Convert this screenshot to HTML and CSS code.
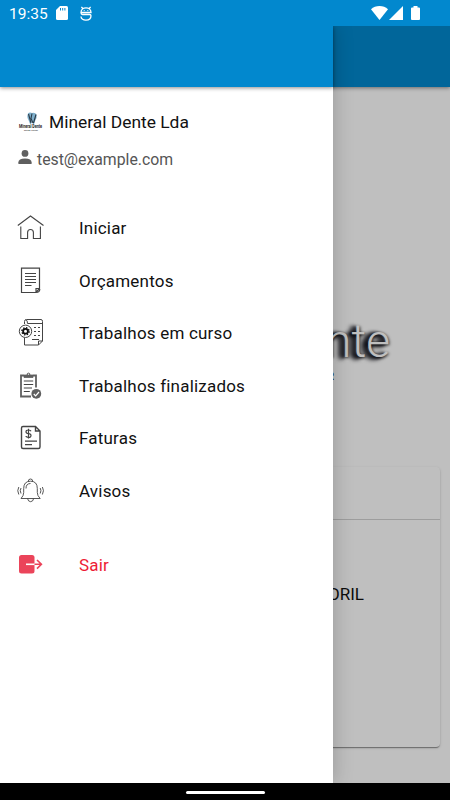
FILE: index.html
```html
<!DOCTYPE html>
<html lang="pt">
<head>
    <meta charset="UTF-8">
    <meta name="viewport" content="width=device-width, initial-scale=1.0">
    <title>Mineral Dente</title>
    <link rel="stylesheet" href="styles.css">
</head>
<body>
    <div class="screen">
        <div class="status-bar">
            <span class="time">19:35</span>
            <svg class="sd" width="12" height="14" viewBox="0 0 12 14">
                <path d="M4 0h6.5Q12 0 12 1.5v11q0 1.5-1.5 1.5h-9Q0 14 0 12.500V4z" fill="#fff"/>
                <path d="M4.500 2v2.500M6.700 2v2.500M8.900 2v2.500" stroke="#0288ce" stroke-width="1"/>
            </svg>
            <svg class="debug" width="12" height="15" viewBox="0 0 12 15" fill="none" stroke="#fff" stroke-width="1.300">
                <path d="M1 6.500C1 .3 11 .3 11 6.500zM1 6.500q0 2 1.500 2h7q1.500 0 1.500 1.200c0 5.800-10 5.800-10 .8M2.800 2.500 1.400.8M9.200 2.500 10.600.8"/>
                <path d="M3.700 4.600h1M7.300 4.600h1" stroke-width="1"/>
            </svg>
            <div class="signals">
                <svg width="17" height="14" viewBox="0 0 17 14" fill="#fff"><path d="M0 3.300Q3.500 0 8.500 0T17 3.300L8.500 14z"/></svg>
                <svg width="14" height="14" viewBox="0 0 14 14" fill="#fff"><path d="M14 0v14H0z"/></svg>
                <svg class="battery" width="9" height="14" viewBox="0 0 9 14" fill="#fff"><path d="M2.500 0h4v1.500H8q1 0 1 1V13q0 1-1 1H1q-1 0-1-1V2.500q0-1 1-1h1.500z"/></svg>
            </div>
        </div>

        <div class="app">
            <div class="page">
                <div class="toolbar"></div>
                <div class="brand">
                    <div class="brand-name">Dente</div>
                    <div class="brand-sub">CENTER</div>
                </div>
                <div class="card">
                    <div class="card-header"></div>
                    <div class="card-body">ESTORIL</div>
                </div>
            </div>
            <div class="backdrop"></div>

            <div class="menu">
                <div class="menu-toolbar"></div>
                <div class="company">
                    <svg class="logo" width="26" height="20" viewBox="0 0 26 20">
                        <path d="M10 1.500Q11.500 0 14 1 17 0 18.500 2.500 19 6 17.500 8l-1.500 4h-1L14 9l-1 3h-1l-1.500-4Q8.500 5 10 1.500z" fill="#7fb0cc"/>
                        <path d="M10.500 2 13 11M14 1.500l-1 5 2 4.500M18 2.500 15.500 11" stroke="#2c3b48" stroke-width="1.100" fill="none"/>
                        <text class="logo-name" x="1" y="16" textLength="23" lengthAdjust="spacingAndGlyphs">Mineral Dente</text>
                        <text class="logo-sub" x="6" y="18.500" textLength="14" lengthAdjust="spacingAndGlyphs">DENTAL CENTER</text>
                    </svg>
                    <span>Mineral Dente Lda</span>
                </div>
                <div class="user">
                    <svg width="14" height="14" viewBox="0 0 14 14" fill="#5f5f5f">
                        <circle cx="7" cy="3.400" r="3.400"/>
                        <path d="M.4 14v-1.700Q.4 8.500 7 8.500t6.600 3.800V14z"/>
                    </svg>
                    <span>test@example.com</span>
                </div>

                <div class="item">
                    <svg class="icon" viewBox="0 0 28 28" stroke-width="1.100">
                        <path d="M.8 11.500 13.500 2 26.500 11.500M3.800 12.500v12h6.800v-6q0-3 2.900-3t2.900 3v6h7v-12"/>
                    </svg>
                    <span>Iniciar</span>
                </div>
                <div class="item">
                    <svg class="icon" viewBox="0 0 28 28" stroke-width="1.200">
                        <path d="M4.500 1.200h18v20.300l-3.500 4H4.500zM19 25.500v-4h3.500M19 25.500q3.800 0 3.800-3.500"/>
                        <path d="M8 6.500h11M8 9.500h11M8 12.500h11M8 15.500h11M8 18.500h6.500"/>
                    </svg>
                    <span>Orçamentos</span>
                </div>
                <div class="item">
                    <svg class="icon" viewBox="0 0 28 28" stroke-width="1">
                        <path d="M7.500 5V2.500Q7.500.5 9.500.5H24q1.500 0 1.500 2v19.500L21.500 26h-14v-7M9 .7q1.500.8 1.500 3.800h14.500M21.500 26v-4h4"/>
                        <path d="M17 8.500h2M21 8.500h2M17 12.500h2M21 12.500h2M17 16.500h2M21 16.500h2M15 20.500h7"/>
                        <circle cx="8.500" cy="12.300" r="6.200" fill="#fff"/>
                        <circle cx="8.500" cy="12.300" r="2.400" stroke="#111" stroke-width="1.800"/>
                        <circle cx="8.500" cy="12.300" r="3.600" stroke="#111" stroke-width="1.400" stroke-dasharray="1.400 1.430"/>
                    </svg>
                    <span>Trabalhos em curso</span>
                </div>
                <div class="item">
                    <svg class="icon" viewBox="0 0 28 28" stroke-width="1.200">
                        <path d="M7 3.500H4v21h10M16 3.500h3v12" stroke="#606060" stroke-width="1.800"/>
                        <path d="M7 5.500V3h3q0-2 1.500-2T13 3h3v2.500z" fill="#606060" stroke="#606060" stroke-width=".8"/>
                        <circle cx="11.500" cy="2.200" r=".6" fill="#fff" stroke="none"/>
                        <path d="M6.800 9h9.400M6.800 12.500h9.400M6.800 16h8.200M6.800 19.500h6"/>
                        <circle cx="19.300" cy="21.800" r="4.900" fill="#606060" stroke="none"/>
                        <path d="m16.800 22 1.800 1.800 3.400-3.800" stroke="#fff"/>
                    </svg>
                    <span>Trabalhos finalizados</span>
                </div>
                <div class="item">
                    <svg class="icon" viewBox="0 0 28 28" stroke-width="1.400">
                        <path d="M18.500 2.500H6q-1.500 0-1.500 1.500v19Q4.500 24.500 6 24.500h15.500Q23 24.500 23 23V7zM18.500 2.500V7H23"/>
                        <path stroke-width="1.200" d="M14 7.300Q13.600 6 11.500 6 9 6 9 7.800T11.500 9.600 14 11.500 11.500 13.300 9 12M11.500 4.700V14.500M8 17.200h12M8 20.700h7"/>
                    </svg>
                    <span>Faturas</span>
                </div>
                <div class="item">
                    <svg class="icon" viewBox="0 0 28 28" stroke-width=".9">
                        <path d="M4 21.500q2.700-2.700 2.700-6v-4q0-7.300 6.800-7.300t6.800 7.300v4q0 3.300 2.900 6zM11.300 4.300q0-2.300 2.200-2.300t2.200 2.300M10.500 21.500q.7 3.200 3.100 3.200t3.100-3.200M9 11.500q0-5 4.500-5"/>
                        <path d="M4 11Q2.500 13.500 4 16.500M1.800 10Q-.3 13.500 1.800 17.500M23.200 11q1.500 2.500 0 5.500M25.400 10q2.100 3.500 0 7.500"/>
                    </svg>
                    <span>Avisos</span>
                </div>
                <div class="item logout">
                    <svg class="icon" viewBox="0 0 28 28">
                        <rect x="2" y="4" width="15.500" height="18.500" rx="2.500" fill="#eb445a" stroke="none"/>
                        <path d="M9 13.300h9" stroke="#fff" stroke-width="1.600"/>
                        <path d="M17.500 13.300H24M20 9l4.400 4.300L20 17.600" stroke="#eb445a" stroke-width="1.600"/>
                    </svg>
                    <span>Sair</span>
                </div>
            </div>
        </div>

        <div class="nav-bar"><div class="handle"></div></div>
    </div>
</body>
</html>
```
FILE: styles.css
```css
body {
    margin: 0;
    font-family: Roboto, sans-serif;
    color: #111;
}
.screen {
    width: 450px;
    height: 800px;
    display: flex;
    flex-direction: column;
    overflow: hidden;
}
.status-bar {
    height: 26px;
    display: flex;
    align-items: center;
    padding: 0 30px 0 9px;
    background: #0288ce;
    color: #fff;
    font-size: 15.5px;
    box-sizing: border-box;
}
.time {
    width: 47px;
    padding-top: 1px;
}
.sd {
    margin-right: 12px;
}
.signals {
    display: flex;
    margin-left: auto;
    gap: 1px;
}
.battery {
    margin-left: 7px;
}
.app {
    position: relative;
    flex: 1;
    overflow: hidden;
}
.page {
    height: 100%;
    display: flex;
    flex-direction: column;
    background: #fff;
}
.toolbar, .menu-toolbar {
    height: 61px;
    flex-shrink: 0;
    background: #0288ce;
    box-shadow: 0 1px 4px rgba(0, 0, 0, 0.45);
}
.brand {
    height: 380px;
    box-sizing: border-box;
    padding: 228px 60px 0 0;
    text-align: right;
    white-space: nowrap;
}
.brand-name {
    font-size: 46px;
    line-height: 52px;
    font-weight: 300;
    color: #fff;
    text-shadow: -3px 1px 3px #101018, -5px 1px 4px #101018, -6px 2px 5px #101018, 1px 1px 3px #444;
}
.brand-sub {
    padding-right: 56px;
    font-size: 11px;
    line-height: 20px;
}
.card {
    height: 280px;
    margin: 0 10px;
    border-radius: 4px;
    box-sizing: border-box;
    box-shadow: 0 2px 1px -1px rgba(0, 0, 0, 0.25), 0 1px 1px rgba(0, 0, 0, 0.16), 0 1px 3px rgba(0, 0, 0, 0.16);
}
.card-header {
    height: 53px;
    box-sizing: border-box;
    border-bottom: 1px solid #d2d2d2;
}
.card-body {
    padding: 63px 76px 0 0;
    text-align: right;
    font-size: 17px;
    line-height: 22px;
}
.backdrop {
    position: absolute;
    inset: 0;
    background: rgba(0, 0, 0, 0.25);
}
.menu {
    position: absolute;
    top: 0;
    left: 0;
    width: 332.5px;
    height: 100%;
    background: #fff;
    box-shadow: 2px 0 18px rgba(0, 0, 0, 0.18);
    font-size: 17px;
}
.company {
    display: flex;
    align-items: center;
    gap: 5px;
    height: 22px;
    padding: 24px 0 0 18px;
    font-size: 17.4px;
}
.logo {
    overflow: visible;
}
.logo-name {
    font-size: 4.5px;
    font-weight: bold;
    fill: #222;
}
.logo-sub {
    font-size: 2.5px;
    fill: #222;
}
.user {
    display: flex;
    align-items: center;
    gap: 5px;
    height: 20px;
    padding: 16px 0 33px 18px;
    font-size: 15.8px;
    color: #555;
}
.user svg {
    margin-top: -4px;
}
.item {
    display: flex;
    align-items: center;
    height: 52.5px;
    padding-left: 17px;
    letter-spacing: 0.2px;
}
.icon {
    width: 28px;
    height: 28px;
    margin-right: 34px;
    fill: none;
    stroke: #444;
    overflow: visible;
}
.logout {
    margin-top: 22px;
    color: #ed1c35;
}
.nav-bar {
    height: 17px;
    display: flex;
    justify-content: center;
    align-items: center;
    background: #000;
}
.handle {
    width: 79px;
    height: 3px;
    margin-top: 2px;
    border-radius: 2px;
    background: #fff;
}
```
